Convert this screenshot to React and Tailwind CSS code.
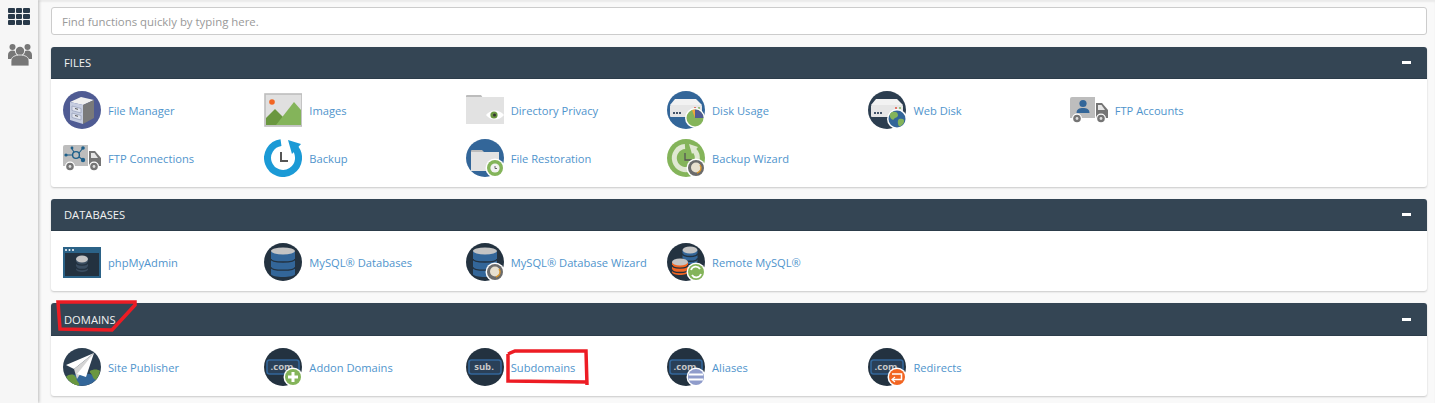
import React from 'react';

// small round badge that sits on the lower right of an icon
const Badge = ({ fill, children }) => (
  <g>
    <circle cx="29" cy="29" r="9.500" fill="#fff" />
    <circle cx="29" cy="29" r="8" fill={fill} />
    {children}
  </g>
);

const Truck = ({ children }) => (
  <g>
    <path d="M0 8a2 2 0 0 1 2-2h23v21H0z" fill="#bdbdbd" />
    <path d="M26 12h6l6 7v8H26z" fill="#757575" />
    <path d="M28 14h3.500l3.500 5h-7z" fill="#e5e5e5" />
    <circle cx="7" cy="27.500" r="5" fill="#fff" />
    <circle cx="7" cy="27.500" r="3.800" fill="#757575" />
    <circle cx="7" cy="27.500" r="1.400" fill="#ddd" />
    <circle cx="31" cy="27.500" r="5" fill="#fff" />
    <circle cx="31" cy="27.500" r="3.800" fill="#757575" />
    <circle cx="31" cy="27.500" r="1.400" fill="#ddd" />
    {children}
  </g>
);

const Server = ({ bg }) => (
  <g>
    <circle cx="19" cy="19" r="19" fill={bg} />
    <path d="M3 14 L8 8 H29 L35 14z" fill="#f2f2f2" />
    <rect x="3" y="14" width="32" height="12" rx="1" fill="#e6e6e6" />
    <rect x="6" y="21" width="2" height="2" fill="#44546a" />
    <rect x="9" y="21" width="2" height="2" fill="#44546a" />
    <rect x="12" y="21" width="2" height="2" fill="#44546a" />
    <circle cx="28" cy="17" r="1" fill="#e0523f" />
    <circle cx="32" cy="17" r="1" fill="#7fb25a" />
  </g>
);

const Database = ({ top = '#c4c4c4', body = '#336699', x = 19, y = 5, w = 24, h = 29 }) => (
  <g>
    <path d={`M${x - w / 2} ${y + 3}v${h - 6}c0 4 ${w} 4 ${w} 0v-${h - 6}z`} fill={body} />
    <ellipse cx={x} cy={y + 3} rx={w / 2} ry="3.500" fill={top} />
    <path d={`M${x - w / 2} ${y + h * 0.38}c0 4 ${w} 4 ${w} 0`} fill="none" stroke="#233240" strokeWidth="1.400" />
    <path d={`M${x - w / 2} ${y + h * 0.66}c0 4 ${w} 4 ${w} 0`} fill="none" stroke="#233240" strokeWidth="1.400" />
  </g>
);

const WizardHat = () => (
  <g>
    <circle cx="29" cy="29" r="9.500" fill="#fff" />
    <circle cx="29" cy="29" r="8" fill="#6b6b6b" />
    <circle cx="29" cy="28.500" r="5" fill="#e8e0cf" />
    <path d="M33 26a5 5 0 0 1-3 8" fill="none" stroke="#d9962b" strokeWidth="1.400" />
  </g>
);

const Dotcom = ({ text = '.com' }) => (
  <g>
    <circle cx="19" cy="19" r="19" fill="#233240" />
    <rect x="3" y="12" width="32" height="14" rx="2.500" fill="#2a4058" stroke="#336699" strokeWidth="1.600" />
    <text x="18" y="21.500" textAnchor="middle" fontSize="9.500" fontWeight="700" fill="#c8c8c8" fontFamily="Open Sans">{text}</text>
  </g>
);

const icons = {
  fileManager: (
    <g>
      <circle cx="19" cy="19" r="19" fill="#4f5b93" />
      <path d="M7 11 L18 6 L31 9 L20 14z" fill="#f0f0f0" />
      <path d="M7 11 L20 14 V33 L7 29z" fill="#c6cde0" />
      <path d="M20 14 L31 9 V27 L20 33z" fill="#7a7a7a" />
      <path d="M9 15 L18 17.500 V22 L9 19.500z" fill="#dfe3ee" stroke="#8a93b0" strokeWidth=".6" />
      <path d="M9 22 L18 24.500 V29 L9 26.500z" fill="#dfe3ee" stroke="#8a93b0" strokeWidth=".6" />
      <path d="M12 17.500l3 .8M12 24.500l3 .8" stroke="#555" strokeWidth="1" />
    </g>
  ),
  images: (
    <g transform="translate(0 2)">
      <rect x="1" y="1" width="37" height="32" fill="#e0e0e0" stroke="#bdbdbd" strokeWidth="1.600" />
      <circle cx="8" cy="9" r="2.800" fill="#f26522" />
      <path d="M2 32V25L11 16l8 8v8z" fill="#6a973f" />
      <path d="M12 32L30 9l7 8v15z" fill="#84b45a" />
    </g>
  ),
  dirPrivacy: (
    <g>
      <path d="M0 5a1 1 0 0 1 1-1h14l2 3H0z" fill="#bcbcbc" />
      <rect x="0" y="6" width="38" height="27" fill="#e2e2e2" />
      <path d="M20 24c5-6 13-6 18 0c-5 6-13 6-18 0z" fill="#fff" />
      <circle cx="28" cy="24" r="3.600" fill="#6a973f" />
      <circle cx="28.500" cy="24" r="1.500" fill="#333" />
    </g>
  ),
  diskUsage: (
    <g>
      <Server bg="#336699" />
      <circle cx="28" cy="27" r="10" fill="#fff" />
      <circle cx="28" cy="27" r="8.500" fill="#84b45a" />
      <path d="M28 27V18.500a8.500 8.500 0 0 1 8.500 8.500z" fill="#4f5b93" />
      <path d="M28 27V18.500a8.500 8.500 0 0 0-3 .6z" fill="#f0a63c" />
    </g>
  ),
  webDisk: (
    <g>
      <Server bg="#2c3e50" />
      <circle cx="29" cy="28" r="10" fill="#fff" />
      <circle cx="29" cy="28" r="8.500" fill="#336699" />
      <path d="M24 21c3-1 6 0 6 3s-3 2-4 4-3 0-4-2 0-4 2-5zM31 28c3-1 6 0 5 3s-4 5-5 4-2-5 0-7z" fill="#84b45a" />
    </g>
  ),
  ftpAccounts: (
    <Truck>
      <circle cx="13" cy="12.500" r="3.600" fill="#336699" />
      <path d="M6.500 22c0-4 3-5 6.500-5s6.500 1 6.500 5z" fill="#336699" />
    </Truck>
  ),
  ftpConnections: (
    <Truck>
      <circle cx="13" cy="16" r="3.400" fill="none" stroke="#1d5f8a" strokeWidth="1.400" />
      <path d="M3 16h7M16 14l4-5M16 18l4 3M11 13l-2-3" stroke="#1d5f8a" strokeWidth="1.100" />
      <circle cx="3" cy="16" r="1.600" fill="#1d5f8a" />
      <circle cx="9" cy="9" r="1.400" fill="#1d5f8a" />
      <circle cx="20" cy="9" r="1.800" fill="#1d5f8a" />
      <circle cx="20" cy="21" r="2.200" fill="#1d5f8a" />
    </Truck>
  ),
  backup: (
    <g>
      <path d="M17 3.600A15.500 15.500 0 1 0 30 8" fill="none" stroke="#1b9ad6" strokeWidth="7" />
      <path d="M24 1l13 4-9 10z" fill="#1b9ad6" />
      <path d="M17 13v9h7" fill="none" stroke="#555" strokeWidth="2" />
    </g>
  ),
  fileRestoration: (
    <g>
      <circle cx="19" cy="19" r="19" fill="#336699" />
      <path d="M5 12a1 1 0 0 1 1-1h10l2 2H5z" fill="#bcbcbc" />
      <rect x="5" y="13" width="28" height="19" fill="#e2e2e2" />
      <Badge fill="#84b45a">
        <circle cx="29" cy="29" r="4.600" fill="#f2f2f2" />
        <path d="M29 27v2.500h2" fill="none" stroke="#555" strokeWidth=".9" />
      </Badge>
    </g>
  ),
  backupWizard: (
    <g>
      <circle cx="19" cy="19" r="19" fill="#84b45a" />
      <path d="M18 7.600A11.500 11.500 0 1 0 27 11" fill="none" stroke="#dfe8d2" strokeWidth="5" />
      <path d="M22 5l9 3-6 7z" fill="#dfe8d2" />
      <path d="M18 14v7h7" fill="none" stroke="#555" strokeWidth="1.300" />
      <WizardHat />
    </g>
  ),
  phpMyAdmin: (
    <g transform="translate(0 3)">
      <rect x="0" y="1" width="38" height="31" fill="#2b6287" />
      <circle cx="3" cy="4" r="1" fill="#fff" />
      <circle cx="6.500" cy="4" r="1" fill="#fff" />
      <circle cx="10" cy="4" r="1" fill="#fff" />
      <rect x="2" y="7" width="34" height="23" fill="#233240" />
      <Database x={19} y={10} w={12} h={16} body="#3a4d60" />
    </g>
  ),
  mysql: (
    <g>
      <circle cx="19" cy="19" r="19" fill="#233240" />
      <Database />
    </g>
  ),
  mysqlWizard: (
    <g>
      <circle cx="19" cy="19" r="19" fill="#233240" />
      <Database />
      <WizardHat />
    </g>
  ),
  remoteMysql: (
    <g>
      <circle cx="19" cy="19" r="19" fill="#233240" />
      <Database x={23} y={4} w={15} h={17} />
      <Database x={13} y={16} w={16} h={16} body="#f26522" />
      <Badge fill="#84b45a">
        <path d="M24 27a5 5 0 0 1 9-1M34 31a5 5 0 0 1-9 1" fill="none" stroke="#fff" strokeWidth="1.800" />
      </Badge>
    </g>
  ),
  sitePublisher: (
    <g>
      <circle cx="19" cy="19" r="19" fill="#2c3e50" />
      <path d="M3 29c5-3 9-2 12-2s10-4 20 2a19 19 0 0 1-32 0z" fill="#336699" />
      <path d="M27 23c3-2 8-2 10 0a19 19 0 0 1-4 9c-3-1-3-3-4-5s-3-3-2-4z" fill="#6a973f" />
      <path d="M3 29c3-3 7-3 9-1s1 4 3 6 1 3 1 3.800a19 19 0 0 1-13-8.800z" fill="#6a973f" />
      <path d="M31 5L3 17l8 4z" fill="#fff" />
      <path d="M31 5L11 21l3 10z" fill="#d5d5d5" />
      <path d="M31 5L14 26l9 3z" fill="#fff" />
    </g>
  ),
  addonDomains: (
    <g>
      <Dotcom />
      <Badge fill="#84b45a">
        <path d="M29 24v10M24 29h10" stroke="#fff" strokeWidth="3" />
      </Badge>
    </g>
  ),
  subdomains: <Dotcom text="sub." />,
  aliases: (
    <g>
      <Dotcom />
      <Badge fill="#8f9ccb">
        <path d="M22 26.500h14M22 31.500h14" stroke="#fff" strokeWidth="2.200" />
      </Badge>
    </g>
  ),
  redirects: (
    <g>
      <Dotcom />
      <Badge fill="#f26522">
        <path d="M24 26h9.500v5.500H25" fill="none" stroke="#fff" strokeWidth="1.500" />
        <path d="M27 29l-3 2.500 3 2.500" fill="none" stroke="#fff" strokeWidth="1.200" />
      </Badge>
    </g>
  ),
};

const sections = [
  {
    title: 'FILES',
    headerClass: 'h-8',
    items: [
      ['File Manager', 'fileManager'],
      ['Images', 'images'],
      ['Directory Privacy', 'dirPrivacy'],
      ['Disk Usage', 'diskUsage'],
      ['Web Disk', 'webDisk'],
      ['FTP Accounts', 'ftpAccounts'],
      ['FTP Connections', 'ftpConnections'],
      ['Backup', 'backup'],
      ['File Restoration', 'fileRestoration'],
      ['Backup Wizard', 'backupWizard'],
    ],
  },
  {
    title: 'DATABASES',
    headerClass: 'h-8',
    items: [
      ['phpMyAdmin', 'phpMyAdmin'],
      ['MySQL® Databases', 'mysql'],
      ['MySQL® Database Wizard', 'mysqlWizard'],
      ['Remote MySQL®', 'remoteMysql'],
    ],
  },
  {
    title: 'DOMAINS',
    headerClass: 'h-[33px]',
    items: [
      ['Site Publisher', 'sitePublisher'],
      ['Addon Domains', 'addonDomains'],
      ['Subdomains', 'subdomains'],
      ['Aliases', 'aliases'],
      ['Redirects', 'redirects'],
    ],
  },
];

const Panel = ({ title, headerClass, items }) => (
  <section className="bg-white rounded-[3px] shadow-[0_1px_2px_rgba(0,0,0,0.2)]">
    <header className={`${headerClass} bg-[#344554] rounded-t-[3px] flex items-center justify-between pl-[13px] pr-[16px] border-b border-[#2c3c4a]`}>
      <h2 className="pt-[2px] text-[11.200px] text-[#f2f2f2]">{title}</h2>
      <span className="w-[9px] h-[3px] bg-white" />
    </header>
    <div className="flex flex-wrap gap-y-[10px] pl-3 pt-3 pb-[10px]">
      {items.map(([label, icon]) => (
        <a key={label} className="w-[201.350px] h-[38px] flex items-center gap-[7px] text-[11.150px] text-[#4f94cc]">
          <svg viewBox="0 0 38 38" className="w-[38px] h-[38px] shrink-0">{icons[icon]}</svg>
          <span className="pt-[2px]">{label}</span>
        </a>
      ))}
    </div>
  </section>
);

export default function App() {
  return (
    <div className="relative h-[403px] overflow-hidden flex bg-[#f9f9f9] font-['Open_Sans',sans-serif] shadow-[inset_0_2px_2px_rgba(0,0,0,0.06)]">
      <aside className="w-[38px] shrink-0 bg-[#f6f6f6] shadow-[1px_0_3px_rgba(0,0,0,0.25)] flex flex-col items-center pt-2">
        <div className="grid grid-cols-3 gap-[1px] w-[22px]">
          {Array.from({ length: 9 }).map((_, i) => (
            <span key={i} className="h-[5px] bg-[#293a4a] rounded-[1px]" />
          ))}
        </div>
        <svg viewBox="0 0 24 22" className="mt-[19px] ml-[1px] w-[24px] h-[22px] text-[#777777]" fill="currentColor">
          <circle cx="4.500" cy="3" r="3" />
          <circle cx="19.500" cy="3" r="3" />
          <path d="M0 15v-4c0-3 2-4.500 4.500-4.500S9 8 9 11v4zM15 15v-4c0-3 2-4.500 4.500-4.500S24 8 24 11v4z" />
          <circle cx="12" cy="7" r="5" fill="#f6f6f6" />
          <circle cx="12" cy="7" r="4.200" />
          <path d="M3 22v-5c0-4 4-6 9-6s9 2 9 6v5z" stroke="#f6f6f6" strokeWidth=".8" />
        </svg>
      </aside>
      <main className="flex-1 pl-[13px] pr-[8px] pt-[7px] flex flex-col">
        <input
          placeholder="Find functions quickly by typing here."
          className="h-[28px] shrink-0 w-full bg-white border border-[#cccccc] rounded-[3px] px-[10px] text-[11.400px] placeholder:text-[#999999] mb-3"
        />
        <div className="flex flex-col gap-3">
          {sections.map((s) => (
            <Panel key={s.title} title={s.title} headerClass={s.headerClass} items={s.items} />
          ))}
        </div>
      </main>
      {/* hand drawn red marks on top of the screenshot */}
      <svg className="absolute inset-0 pointer-events-none" width="1435" height="403">
        <path d="M58 302H135V305L112 330L60 329Z" fill="none" stroke="#ed1c24" strokeWidth="3.500" />
        <path d="M508 354L515 351L586 351L587 385M587 382L508 381V354" fill="none" stroke="#ed1c24" strokeWidth="3.500" />
      </svg>
    </div>
  );
}
